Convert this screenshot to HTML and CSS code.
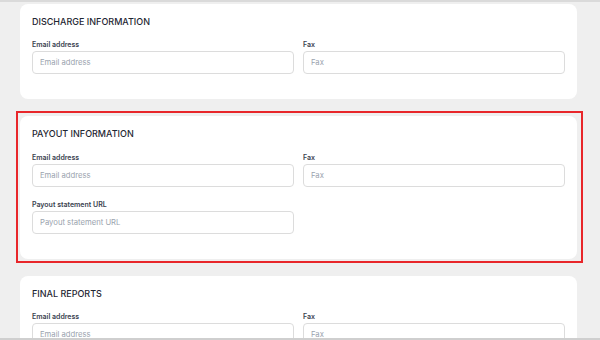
FILE: index.html
```html
<!DOCTYPE html>
<html lang="en">
<head>
  <meta charset="UTF-8">
  <meta name="viewport" content="width=device-width, initial-scale=1.0">
  <title>Contacts</title>
  <link rel="stylesheet" href="styles.css">
</head>
<body>
  <div class="page">
    <!-- Discharge -->
    <section class="card">
      <h2 class="card-title">DISCHARGE INFORMATION</h2>
      <div class="fields">
        <div class="field">
          <label class="field-label">Email address</label>
          <input class="field-input" type="text" placeholder="Email address">
        </div>
        <div class="field">
          <label class="field-label">Fax</label>
          <input class="field-input" type="text" placeholder="Fax">
        </div>
      </div>
    </section>

    <!-- Payout (highlighted) -->
    <div class="highlight">
      <section class="card">
        <h2 class="card-title">PAYOUT INFORMATION</h2>
        <div class="fields">
          <div class="field">
            <label class="field-label">Email address</label>
            <input class="field-input" type="text" placeholder="Email address">
          </div>
          <div class="field">
            <label class="field-label">Fax</label>
            <input class="field-input" type="text" placeholder="Fax">
          </div>
          <div class="field">
            <label class="field-label">Payout statement URL</label>
            <input class="field-input" type="text" placeholder="Payout statement URL">
          </div>
        </div>
      </section>
    </div>

    <!-- Final reports -->
    <section class="card">
      <h2 class="card-title">FINAL REPORTS</h2>
      <div class="fields">
        <div class="field">
          <label class="field-label">Email address</label>
          <input class="field-input" type="text" placeholder="Email address">
        </div>
        <div class="field">
          <label class="field-label">Fax</label>
          <input class="field-input" type="text" placeholder="Fax">
        </div>
      </div>
    </section>
  </div>
  <div class="bottom-line"></div>
</body>
</html>
```

FILE: styles.css
```css
/* General Styling */
body {
  margin: 0;
  font-family: Inter, "Noto Sans", sans-serif;
  background-color: #efefef;
  overflow: hidden;
}

.page {
  border-top: 2px solid #dadada;
  padding: 2px 23px 0 20px;
}

.card {
  background: #fff;
  border-radius: 8px;
  padding: 12px 12px 25px;
}

.card + .highlight {
  margin-top: 12px;
}

.highlight + .card {
  margin-top: 13px;
}

.highlight {
  border: 2px solid #e8262a;
  padding: 3px 4px 2px 2px;
  margin: 0 -6px 0 -4px;
}

.highlight .card-title {
  margin-bottom: 13px;
}

.card-title {
  margin: 0 0 12px;
  font-size: 9px;
  line-height: 12px;
  font-weight: 500;
  color: #1f2733;
}

.fields {
  display: grid;
  grid-template-columns: 1fr 1fr;
  column-gap: 9px;
  row-gap: 13px;
}

.field {
  display: flex;
  flex-direction: column;
}

.field-label {
  font-size: 7px;
  line-height: 10px;
  font-weight: 600;
  color: #3a4250;
  margin-bottom: 1px;
}

.field-input {
  box-sizing: border-box;
  height: 23px;
  border: 1px solid #dcdcdc;
  border-radius: 4px;
  padding: 0 7px;
  font-family: inherit;
  font-size: 7.7px;
  color: #333;
  background: #fff;
  outline: none;
}

.field-input::placeholder {
  color: #9aa3ae;
}

/* Thin divider pinned at the bottom edge of the window */
.bottom-line {
  position: fixed;
  left: 0;
  right: 0;
  bottom: 0;
  height: 2px;
  background: #cfcfcf;
}
```
